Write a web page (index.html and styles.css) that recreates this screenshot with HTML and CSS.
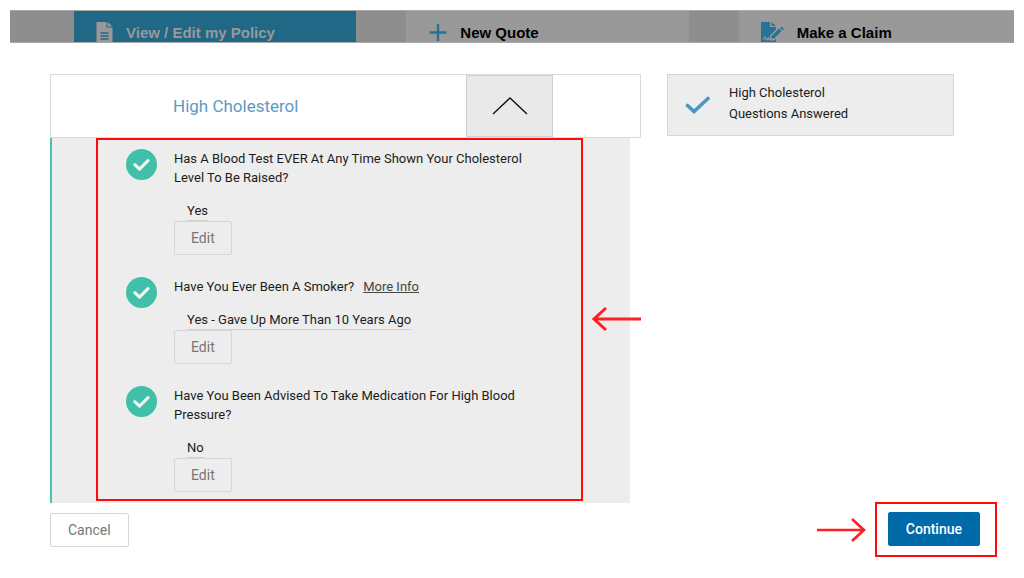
FILE: index.html
```html
<!DOCTYPE html>
<html lang="en">
<head>
<meta charset="utf-8">
<title>High Cholesterol Questions</title>
<link rel="stylesheet" href="styles.css">
</head>
<body>
<svg class="defs" aria-hidden="true">
  <symbol id="tick" viewBox="0 0 30 30">
    <circle cx="15" cy="15" r="15" fill="#40c0a8"/>
    <path d="M8.500 15.200l4.600 4.300 8.200-8.200" fill="none" stroke="#f4f4f4" stroke-width="3" stroke-linecap="round" stroke-linejoin="round"/>
  </symbol>
</svg>
<nav class="tabs">
  <a class="tab tab-active" href="#policy">
    <svg class="tab-icon" viewBox="0 0 24 24"><path fill="#999" d="M2.500 1h10v5.500h6V24h-16z M13.500 1l5 4.500h-5z"/><path d="M6.500 12h8M6.500 15h8M6.500 18h8" stroke="#216786" stroke-width="1.300"/></svg>
    <span>View / Edit my Policy</span>
  </a>
  <a class="tab tab-quote" href="#quote">
    <svg class="tab-icon" viewBox="0 0 24 24"><path d="M12 3v17M3.500 11.500h17" stroke="#257396" stroke-width="2.400"/></svg>
    <span>New Quote</span>
  </a>
  <a class="tab tab-last" href="#claim">
    <svg class="tab-icon" viewBox="0 0 24 24"><path fill="#257396" d="M2 1h9v5h6v2.500l-6 6V19h5l1-1v4H2z M12.500 1l4.500 4h-4.500z M12.500 15l7.500-7.500 2.500 2.500-7.500 7.500h-2.500z M21 6.500l1.500-1 2.500 2.500-1.500 1.500z"/><path d="M4 19l2-3 2 3 1.500-2 1 2h5" fill="none" stroke="#999" stroke-width="1.200"/></svg>
    <span>Make a Claim</span>
  </a>
</nav>
<main class="content">
  <div class="columns">
    <section class="panel">
      <header class="panel-head">
        <h1 class="panel-title">High Cholesterol</h1>
        <button class="toggle" type="button" aria-label="Collapse" aria-expanded="true">
          <svg width="38" height="22" viewBox="0 0 38 22"><path d="M2 19L19 3l17 16" fill="none" stroke="#111" stroke-width="1.400"/></svg>
        </button>
      </header>
      <div class="panel-body">
        <ul class="questions">
          <li class="question">
            <svg class="tick"><use href="#tick"/></svg>
            <div>
              <p class="ask">Has A Blood Test EVER At Any Time Shown Your Cholesterol Level To Be Raised?</p>
              <p class="answer"><span>Yes</span></p>
              <button class="btn btn-edit" type="button">Edit</button>
            </div>
          </li>
          <li class="question">
            <svg class="tick"><use href="#tick"/></svg>
            <div>
              <p class="ask">Have You Ever Been A Smoker?<a class="more" href="#info">More Info</a></p>
              <p class="answer"><span>Yes - Gave Up More Than 10 Years Ago</span></p>
              <button class="btn btn-edit" type="button">Edit</button>
            </div>
          </li>
          <li class="question">
            <svg class="tick"><use href="#tick"/></svg>
            <div>
              <p class="ask">Have You Been Advised To Take Medication For High Blood Pressure?</p>
              <p class="answer"><span>No</span></p>
              <button class="btn btn-edit" type="button">Edit</button>
            </div>
          </li>
        </ul>
        <svg class="arrow arrow-left" viewBox="0 0 50 26"><path d="M50 13H3M15 2L3 13l12 11" fill="none" stroke="#ff1f1f" stroke-width="3"/></svg>
      </div>
    </section>
    <aside class="summary">
      <svg class="summary-tick" viewBox="0 0 26 20"><path d="M2.500 10.500l6.500 6L23 3.500" fill="none" stroke="#4a97c4" stroke-width="3.600" stroke-linecap="round"/></svg>
      <p class="summary-text">High Cholesterol<br>Questions Answered</p>
    </aside>
  </div>
  <footer class="actions">
    <button class="btn btn-cancel" type="button">Cancel</button>
    <svg class="arrow" viewBox="0 0 50 26"><path d="M0 13H47M35 2l12 11-12 11" fill="none" stroke="#ff1f1f" stroke-width="2.600"/></svg>
    <div class="callout">
      <button class="btn btn-continue" type="button">Continue</button>
    </div>
  </footer>
</main>
</body>
</html>
```
FILE: styles.css
```css
* { box-sizing: border-box; }
body { margin: 0; padding: 10px; background: #fff; font-family: Roboto, "Liberation Sans", sans-serif; font-size: 13px; line-height: 19px; color: #1c1c1c; }
h1, p, ul { margin: 0; padding: 0; }
.defs { display: none; }
.tabs { display: grid; grid-template-columns: 282fr 282fr 275fr; column-gap: 50px; height: 33px; padding-left: 64px; overflow: hidden; background: #8e8e8e; border-top: 1px solid #aaa; border-bottom: 1px solid #aaa; }
.tab { display: flex; align-items: flex-start; gap: 8px; padding: 10px 0 0 20px; background: #999; color: #000; font: bold 15px/24px "Liberation Sans", Arial, sans-serif; text-decoration: none; white-space: nowrap; }
.tab-active { background: #216786; color: #999; }
.tab-icon { flex: none; width: 24px; height: 24px; overflow: visible; }
.tab-quote { gap: 10px; }
.tab-last { gap: 14px; }
.content { padding: 31px 17px 0 40px; }
.columns { display: grid; grid-template-columns: 591fr 287fr; column-gap: 26px; align-items: start; padding-right: 43px; }
.panel-head { display: flex; min-height: 64px; padding: 0 87px 0 122px; border: 1px solid #d9dcdc; background: #fff; }
.panel-title { flex: 1; align-self: center; font-size: 17px; line-height: 24px; font-weight: 400; color: #5b9bc4; }
.toggle { display: flex; align-items: center; justify-content: center; width: 87px; padding: 0; border: 1px solid #cfd2d2; background: #e9e9e9; }
.panel-body { position: relative; margin-right: 11px; padding: 0 47px 2px 44px; border-left: 2px solid #4bc2ab; background: #ededed; }
.questions { display: flex; flex-direction: column; gap: 22px; padding: 9px 28px 7px; border: 2px solid #ff0a0a; list-style: none; }
.question { display: flex; align-items: flex-start; gap: 17px; }
.tick { flex: none; width: 31px; height: 31px; }
.more { margin-left: 9px; color: #444; }
.answer { margin: 14px 0 0 13px; }
.answer span { display: inline-block; border-bottom: 1px solid #d0d0d0; vertical-align: top; }
.btn { display: block; min-height: 34px; padding: 0 16px; border: 1px solid #d5d5d5; border-radius: 2px; background: transparent; color: #777; font: 14px/20px Roboto, "Liberation Sans", sans-serif; }
.arrow { width: 50px; height: 26px; }
.arrow-left { position: absolute; right: -11px; top: 168px; }
.summary { display: flex; align-items: center; gap: 18px; min-height: 62px; padding: 0 17px; border: 1px solid #d5d5d5; background: #ededed; }
.summary-tick { flex: none; width: 26px; height: 20px; }
.summary-text { line-height: 21px; padding-bottom: 4px; }
.actions { display: flex; align-items: center; gap: 8px; margin-top: -1px; }
.btn-cancel { margin-right: auto; padding: 0 17px; background: #fff; }
.callout { padding: 8px 15px 9px 11px; border: 2px solid #ff0a0a; }
.btn-continue { padding: 0 17px; border-color: #006ba8; background: #006ba8; color: #fff; font-weight: 500; }
```
